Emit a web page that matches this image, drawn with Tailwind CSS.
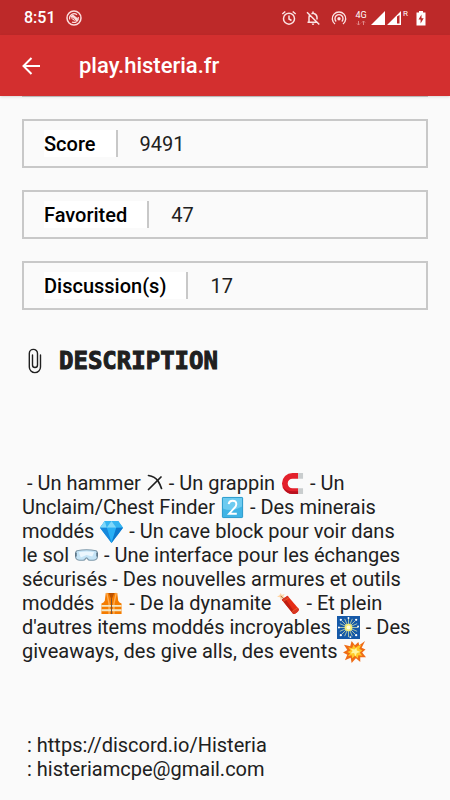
<!DOCTYPE html>
<html lang="fr">
<head>
<meta charset="utf-8">
<meta name="viewport" content="width=device-width, initial-scale=1">
<title>play.histeria.fr</title>
<script src="https://cdn.jsdelivr.net/npm/@tailwindcss/browser@4"></script>
</head>
<body class="min-h-screen bg-[#fafafa] font-['Roboto',sans-serif] text-[#202020]">
<header class="text-white">
  <div class="flex h-[35px] items-center bg-[#bd2929] pr-6 pl-6">
    <span class="text-base font-medium">8:51</span>
    <svg class="ml-2.5 size-4" viewBox="0 0 16 16" fill="none" stroke="#fbdcdc" aria-hidden="true">
      <circle cx="8" cy="8" r="7" stroke-width="1.500"/>
      <path d="M3.800 9.500A4.500 4.500 0 0 1 11 4.700M12.300 7A4.500 4.500 0 0 1 6 12" stroke-width="1.200"/>
      <path d="M4.500 6 7 4.500 12 8.500 11.500 11 9.500 11.500 5 8.500Z" fill="#fbdcdc" stroke="none"/>
      <path d="M4.500 8 7.500 8.200 10 11.500" stroke="#bd2929" stroke-width=".7"/>
    </svg>
    <div class="ml-auto flex items-center">
      <svg class="size-4" viewBox="0 0 16 16" fill="none" stroke="#fbe3e3" stroke-width="1.5" aria-hidden="true">
        <circle cx="8" cy="8.700" r="5.500"/><path d="M8 5.500V9L10.500 10.500M1.300 4 4.300 1.500M14.700 4 11.700 1.500"/>
      </svg>
      <svg class="ml-2 size-4" viewBox="0 0 16 16" fill="none" stroke="#fbe3e3" stroke-width="1.500" aria-hidden="true">
        <path d="M4 12.200V7.500Q4 5.500 5 4.700M6.500 3.700Q8 3 9.500 3.700Q12 4.700 12 7.500V9.500M2.500 12.200H11.500M2 2.200 14.300 14.500M8 3.200V1.500"/><path d="M6.700 13.500H9.300Q9 15 8 15T6.700 13.500Z" fill="#fbe3e3" stroke="none"/>
      </svg>
      <svg class="ml-2.5 size-4" viewBox="0 0 16 16" fill="none" stroke="#fbe3e3" stroke-width="1.4" aria-hidden="true">
        <path d="M4 14A6.700 6.700 0 1 1 12 14M5.200 11.500A4 4 0 1 1 10.800 11.500"/><circle cx="8" cy="8.800" r="1.700" fill="#fbe3e3" stroke="none"/>
      </svg>
      <div class="ml-2 flex w-3 flex-col items-center">
        <span class="text-[9px] leading-[10px]">4G</span>
        <svg class="h-1.5 w-2.5" viewBox="0 0 10 6" fill="none" stroke="#df8787" stroke-width="1" aria-hidden="true"><path d="M2.500 1V5M1 3.500 2.500 5 4 3.500M7.500 5V1M6 2.500 7.500 1 9 2.500"/></svg>
      </div>
      <svg class="ml-1 h-3.5 w-[30px]" viewBox="0 0 30 14" fill="#fff" aria-hidden="true"><path d="M0 14 14 0V14Z"/><path fill-rule="evenodd" d="M16 14 30 0V14ZM26 5.500V12.500H28.500V4Z"/></svg>
      <span class="mb-2 ml-0.5 text-[8px] leading-[10px]">R</span>
      <svg class="ml-2 h-4 w-2.5" viewBox="0 0 10 16" aria-hidden="true"><path d="M3 1H7V2.500H9.500V15.500H.5V2.500H3Z" fill="#fff"/><path d="M5.500 4.500 2.500 9.500H4.600V13.500L7.700 8.300H5.500Z" fill="#bd2929"/></svg>
    </div>
  </div>
  <div class="flex h-[61px] items-center bg-[#d32f2f] px-5 shadow-sm">
    <button type="button" aria-label="Retour" class="flex size-[22px] items-center justify-center">
      <svg class="size-5" viewBox="0 0 20 20" fill="none" stroke="#fff" stroke-width="2" aria-hidden="true"><path d="M19 10H2.500M10.500 2 2.500 10 10.500 18"/></svg>
    </button>
    <h1 class="ml-[37px] text-[22px] leading-7 font-medium">play.histeria.fr</h1>
  </div>
</header>
<main class="px-[22px]">
  <div class="h-px bg-[#b8b8b8]"></div>
  <dl class="mt-[22px] flex flex-col gap-[22px] text-xl leading-[25px]">
    <div class="flex border-2 border-[#c8c8c8] px-5 py-[9px]">
      <dt class="border-r-2 border-[#c8c8c8] bg-white pt-0.5 pr-5 font-medium text-black">Score</dt><dd class="pt-0.5 pl-[22px]">9491</dd>
    </div>
    <div class="flex border-2 border-[#c8c8c8] px-5 py-[9px]">
      <dt class="border-r-2 border-[#c8c8c8] bg-white pt-0.5 pr-5 font-medium text-black">Favorited</dt><dd class="pt-0.5 pl-[22px]">47</dd>
    </div>
    <div class="flex border-2 border-[#c8c8c8] px-5 py-[9px]">
      <dt class="border-r-2 border-[#c8c8c8] bg-white pt-0.5 pr-5 font-medium text-black">Discussion(s)</dt><dd class="pt-0.5 pl-[22px]">17</dd>
    </div>
  </dl>
  <section>
    <div class="mt-[37px] flex items-center gap-[17px] pl-1.5">
      <svg class="h-[26px] w-3.5" viewBox="0 0 14 26" fill="none" stroke="#202020" stroke-width="1.400" stroke-linecap="round" aria-hidden="true"><path d="M12.500 7V19A5.600 5.600 0 0 1 1.300 19V5.500A4 4 0 0 1 9.500 5.500V17A2.500 2.500 0 0 1 4.500 17V7"/></svg>
      <h2 class="font-['DejaVu_Sans_Mono',monospace] text-2xl leading-7 font-bold [-webkit-text-stroke:1px_#202020]">DESCRIPTION</h2>
    </div>
    <p class="mt-24 pr-4 text-xl leading-6">&nbsp;- Un hammer
      <svg class="mx-px inline-block h-5 w-4 align-[-3px]" viewBox="0 0 16 20" fill="none" stroke="#202020" stroke-linecap="round" role="img" aria-label="pioche"><path d="M1.500 2.500Q8 3.500 11 8Q13.500 12 14.500 15.500" stroke-width="1.700"/><path d="M1.500 16.500 14 4" stroke-width="1.700"/></svg>
      - Un grappin
      <svg class="mx-px inline-block size-[23px] align-[-5px]" viewBox="0 0 24 24" role="img" aria-label="aimant"><path d="M18 1H12A11 11 0 0 0 12 23H18V17H12A5 5 0 0 1 12 7H18Z" fill="#e3202b"/><path d="M18 20H12Q5 20 2 15Q5 23 12 23H18Z" fill="#b9111f"/><path d="M18 1H23V7H18ZM18 17H23V23H18Z" fill="#c9cdce"/></svg>
      - Un Unclaim/Chest Finder
      <svg class="mx-px inline-block size-[23px] align-[-5px]" viewBox="0 0 24 24" role="img" aria-label="2"><rect x="1" y="1" width="22" height="22" rx="1.500" fill="#40b4e5"/><path d="M2 2H22V11Q12 17 2 13Z" fill="#6dcbf0"/><rect x="1.500" y="1.500" width="21" height="21" rx="1" fill="none" stroke="#319dcc"/><path d="M8 8.500Q8.500 5 12 5Q16 5 16 8.500Q16 10.500 13.500 13L8.500 18.500H16.500" fill="none" stroke="#fff" stroke-width="2"/></svg>
      - Des minerais moddés
      <svg class="mx-px inline-block size-[23px] align-[-5px]" viewBox="0 0 24 24" role="img" aria-label="diamant"><path d="M5 1H19L24 8 12 24 0 8Z" fill="#1c9be8"/><path d="M5 1H19L24 8H0Z" fill="#35b5f1"/><path d="M5 1 7 8H0ZM12 1 17 8H7Z" fill="#80d8fa"/><path d="M7 8H17L12 24Z" fill="#29b0f4"/><path d="M0 8H7L12 24Z" fill="#1688dc"/><path d="M17 8H24L12 24Z" fill="#0d79cd"/></svg>
      - Un cave block pour voir dans le sol
      <svg class="mx-px inline-block size-[23px] align-[-5px]" viewBox="0 0 24 24" role="img" aria-label="lunettes"><path d="M2 7Q12 5 22 7Q24 8 23.500 13Q23 17 19 17H15.500Q14 17 12.800 15Q12 14 11.200 15Q10 17 8.500 17H5Q1 17 .5 13Q0 8 2 7Z" fill="#c5e4f6" stroke="#7f99aa" stroke-width="1.200"/><path d="M4 8.500Q12 7 20 8.500L18 13 12 11.500 6 14Z" fill="#ecf7fe"/><path d="M1 9V13M23 9V13" stroke="#536b7d" stroke-width="1.500"/></svg>
      - Une interface pour les échanges sécurisés - Des nouvelles armures et outils moddés
      <svg class="mx-px inline-block size-[23px] align-[-5px]" viewBox="0 0 24 24" role="img" aria-label="gilet"><path d="M6 1H18L19 9Q20 11 22.500 12V23H1.500V12Q4 11 5 9Z" fill="#f57c00"/><path d="M9 1H15L12 8Z" fill="#bb5200"/><path d="M7 1 9.500 12V23M17 1 14.500 12V23" stroke="#ffae54" stroke-width="1.500" fill="none"/><path d="M1.500 14.500H22.500M1.500 19H22.500" stroke="#f3e7c5" stroke-width="2"/><path d="M12 7V23" stroke="#74513b"/></svg>
      - De la dynamite
      <svg class="mx-px inline-block size-[23px] align-[-5px]" viewBox="0 0 24 24" role="img" aria-label="pétard"><path d="M4 1 5 3 8 2 6.500 4.500 8.500 6.500 5.500 6 4 8.500 3 5.500 0 5 2.500 3.500Z" fill="#ffd5a5"/><path d="M4 4Q5 6 7 7" stroke="#a06b43" fill="none"/><path d="M5 8 11 4 23 18Q22 22 17 23Z" fill="#e52c15"/><path d="M5 8 8 6 19 22 17 23Z" fill="#bf1e12"/><path d="M5 8 11 4 12.500 6 6.500 10ZM15.500 20.500 21.500 16.500 23 18Q22 22 17 23Z" fill="#d83522"/><path d="M6.500 10 12.500 6M15.500 20.500 21.500 16.500" stroke="#f58b37" stroke-width=".5"/></svg>
      - Et plein d'autres items moddés incroyables
      <svg class="mx-px inline-block size-[23px] align-[-5px]" viewBox="0 0 24 24" role="img" aria-label="étincelles"><rect width="24" height="24" fill="#1559a8"/><path d="M12 2V22M2 12H22M5 5 19 19M5 19 19 5M8 3 16 21M3 8 21 16M16 3 8 21M3 16 21 8" stroke="#d4dfaa" stroke-width=".8"/><circle cx="12" cy="12" r="4" fill="#f4ed78"/><circle cx="12" cy="12" r="2" fill="#fffde0"/><g fill="#fff"><circle cx="4" cy="4" r="1.200"/><circle cx="12" cy="2" r="1"/><circle cx="20" cy="4" r="1.200"/><circle cx="2" cy="12" r="1"/><circle cx="22" cy="11" r="1"/><circle cx="4" cy="20" r="1.200"/><circle cx="14" cy="22" r="1"/><circle cx="20" cy="20" r="1.200"/></g></svg>
      - Des giveaways, des give alls, des events
      <svg class="mx-px inline-block size-[23px] align-[-5px]" viewBox="0 0 24 24" role="img" aria-label="explosion"><path d="M23 1 19.500 8 23.500 10 20 13 24 18 18 18 18 23 13.500 19 9 24 8 18.500 2 21 4.500 15.500 0 13 4.500 10.500 1 5 7.500 6.500 9 1 12.500 5.500 16 2 17 5.500Z" fill="#ef6c16"/><path d="M19 5 17 9 20 11 17.500 13 20 16.500 16 16 15.500 19 12.500 16.500 9.500 19 9 16 5 17 7.500 14 4.500 12.500 8 11 5.500 7.500 9.500 8.500 11 5 13 8 16 6Z" fill="#ffca28"/><path d="M14 8 14.500 11 18 12.500 14.500 13.500 13 17 11.500 13.500 8 14 10 11.500 8 9 12 10Z" fill="#fff59d"/></svg>
    </p>
    <address class="mt-[70px] pl-[5px] text-xl leading-6 not-italic">
      <div>: <a href="https://discord.io/Histeria">https://discord.io/Histeria</a></div>
      <div>: <a href="mailto:histeriamcpe@gmail.com">histeriamcpe@gmail.com</a></div>
    </address>
  </section>
</main>
</body>
</html>
